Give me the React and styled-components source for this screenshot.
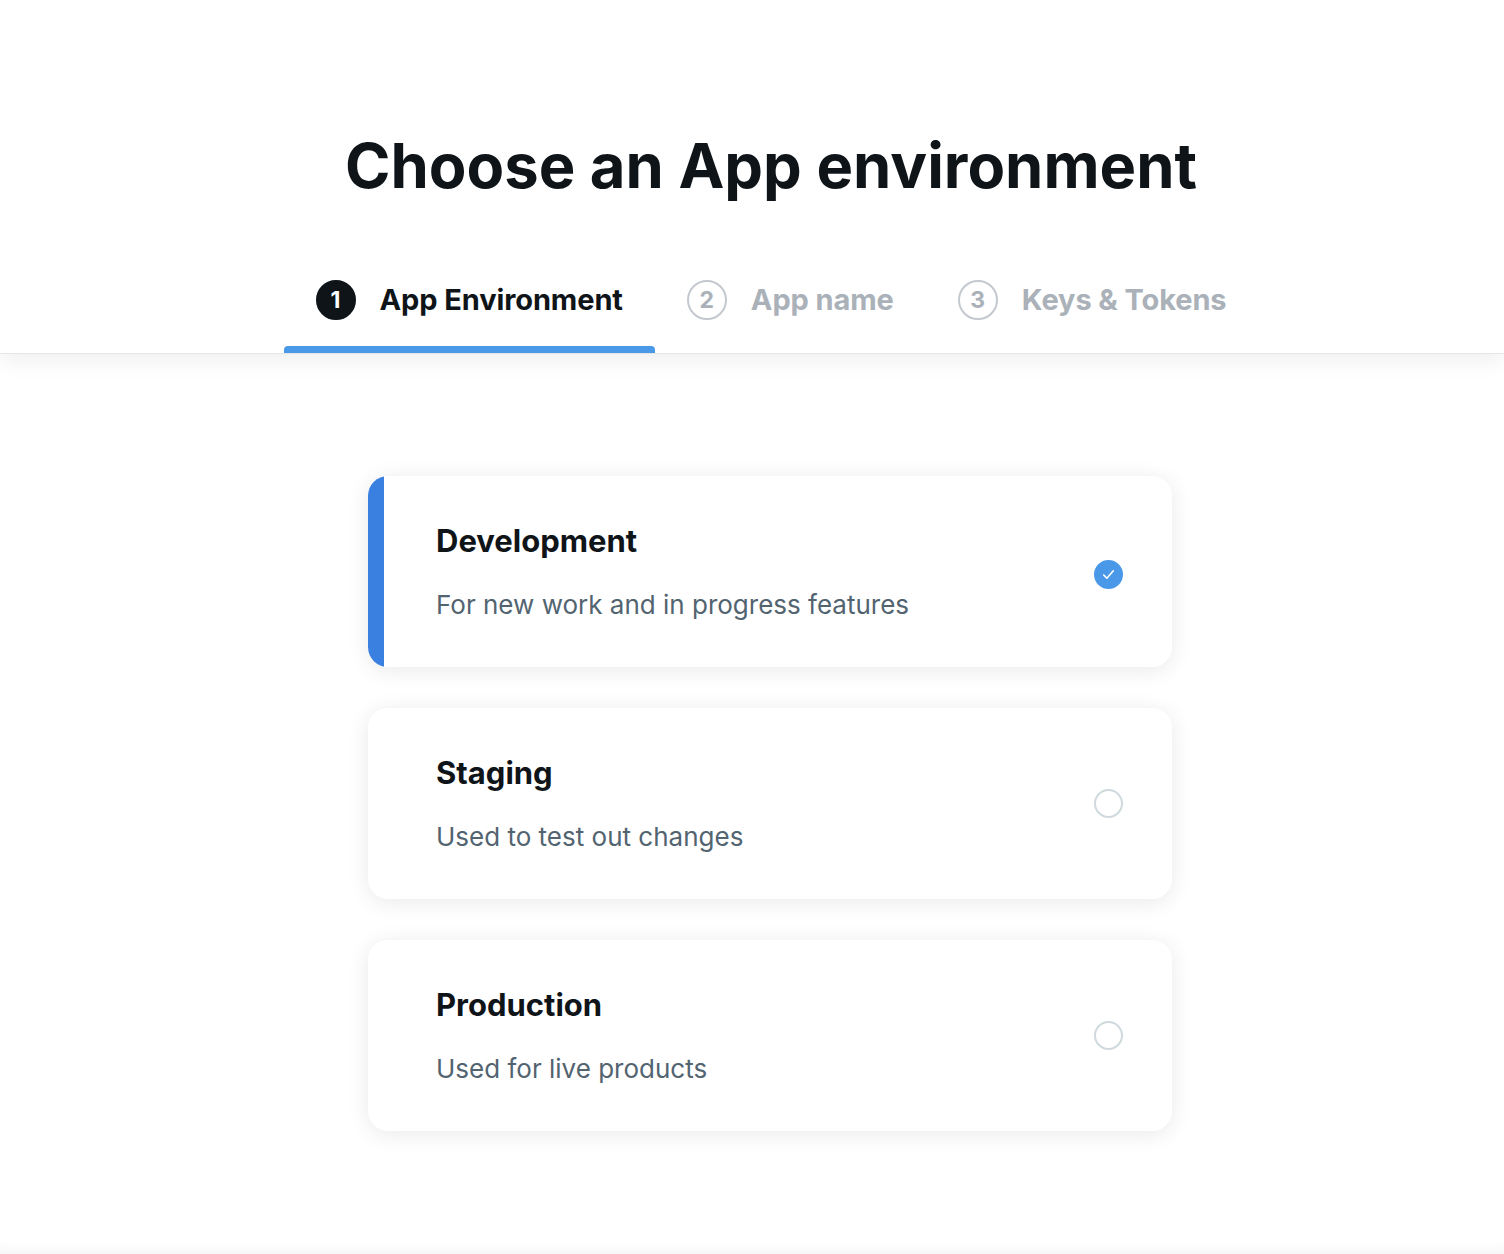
import React, { useState } from "react";
import styled, { createGlobalStyle } from "styled-components";

const GlobalStyle = createGlobalStyle`
  html, body {
    margin: 0;
    padding: 0;
    background: #ffffff;
  }
  body {
    font-family: Inter, "Noto Sans", "Liberation Sans", sans-serif;
    color: #0f1419;
  }
`;

const Page = styled.div`
  min-height: 1254px;
  display: flex;
  flex-direction: column;
  background: #fff;
`;

const Header = styled.header`
  background: #fff;
  border-bottom: 1px solid #e3e6e9;
  box-shadow: 0 6px 22px rgba(0, 0, 0, 0.07);
  display: flex;
  flex-direction: column;
  align-items: center;
  padding: 130px 0 0 38px;
  position: relative;
  z-index: 1;
`;

const Title = styled.h1`
  margin: 0;
  font-size: 61.5px;
  line-height: 72px;
  font-weight: 700;
  color: #0f1419;
`;

const Steps = styled.nav`
  display: flex;
  margin-top: 58px;
`;

const Step = styled.div`
  display: flex;
  align-items: center;
  gap: 24px;
  padding: 0 32px 14px;
  height: 93px;
  box-sizing: border-box;
  position: relative;
  color: ${(p) => (p.$active ? "#0f1419" : "#aab1b9")};
`;

const Underline = styled.span`
  position: absolute;
  left: 0;
  right: 0;
  bottom: 0;
  height: 7px;
  border-radius: 4px 4px 0 0;
  background: #4a99e9;
`;

const StepNum = styled.span`
  width: 40px;
  height: 40px;
  border-radius: 50%;
  box-sizing: border-box;
  display: flex;
  align-items: center;
  justify-content: center;
  font-size: 23px;
  font-weight: 700;
  background: ${(p) => (p.$active ? "#0f1419" : "transparent")};
  color: ${(p) => (p.$active ? "#fff" : "#aab1b9")};
  border: 2px solid ${(p) => (p.$active ? "#0f1419" : "#c4c9cf")};
`;

const StepLabel = styled.span`
  font-size: 29px;
  font-weight: 700;
  letter-spacing: -0.1px;
`;

const Main = styled.main`
  flex: 1;
  display: flex;
  flex-direction: column;
  align-items: center;
  gap: 41px;
  padding: 122px 0 120px 36px;
  background: #fff;
  box-shadow: inset 0 -14px 14px -12px rgba(0, 0, 0, 0.06);
`;

const Card = styled.button`
  all: unset;
  cursor: pointer;
  box-sizing: border-box;
  width: 804px;
  height: 191px;
  border-radius: 20px;
  background: #fff;
  box-shadow: 0 3px 22px rgba(0, 0, 0, 0.09);
  display: flex;
  align-items: center;
  justify-content: space-between;
  padding: 0 49px 0 68px;
  position: relative;
  overflow: hidden;
  &::before {
    content: "";
    position: absolute;
    left: 0;
    top: 0;
    bottom: 0;
    width: 16px;
    background: ${(p) => (p.$selected ? "#3a80e0" : "transparent")};
  }
`;

const CardText = styled.div`
  display: flex;
  flex-direction: column;
  gap: 30px;
  margin-top: 0;
`;

const CardTitle = styled.div`
  font-size: 31px;
  line-height: 36px;
  font-weight: 700;
  color: #0f1419;
`;

const CardDesc = styled.div`
  font-size: 26px;
  line-height: 32px;
  color: #536471;
`;

const Radio = styled.span`
  width: 29px;
  height: 29px;
  border-radius: 50%;
  box-sizing: border-box;
  display: flex;
  align-items: center;
  justify-content: center;
  margin-top: ${(p) => (p.$checked ? "6px" : "0")};
  background: ${(p) => (p.$checked ? "#4a99e9" : "#fff")};
  border: 2px solid ${(p) => (p.$checked ? "#4a99e9" : "#cfd9de")};
`;

const steps = [
  { n: 1, label: "App Environment" },
  { n: 2, label: "App name" },
  { n: 3, label: "Keys & Tokens" },
];

const envs = [
  { name: "Development", desc: "For new work and in progress features" },
  { name: "Staging", desc: "Used to test out changes" },
  { name: "Production", desc: "Used for live products" },
];

export default function App() {
  const [selected, setSelected] = useState("Development");
  return (
    <Page>
      <GlobalStyle />
      <Header>
        <Title>Choose an App environment</Title>
        <Steps>
          {steps.map((s) => (
            <Step key={s.n} $active={s.n === 1}>
              <StepNum $active={s.n === 1}>{s.n}</StepNum>
              <StepLabel>{s.label}</StepLabel>
              {s.n === 1 && <Underline />}
            </Step>
          ))}
        </Steps>
      </Header>
      <Main>
        {envs.map((e) => (
          <Card
            key={e.name}
            $selected={selected === e.name}
            onClick={() => setSelected(e.name)}
          >
            <CardText>
              <CardTitle>{e.name}</CardTitle>
              <CardDesc>{e.desc}</CardDesc>
            </CardText>
            <Radio $checked={selected === e.name}>
              {selected === e.name && (
                <svg width="15" height="15" viewBox="0 0 14 14" fill="none">
                  <path
                    d="M2.5 7.5 L5.5 10.5 L11.5 3.5"
                    stroke="#fff"
                    strokeWidth="1.5"
                    strokeLinecap="round"
                    strokeLinejoin="round"
                  />
                </svg>
              )}
            </Radio>
          </Card>
        ))}
      </Main>
    </Page>
  );
}
